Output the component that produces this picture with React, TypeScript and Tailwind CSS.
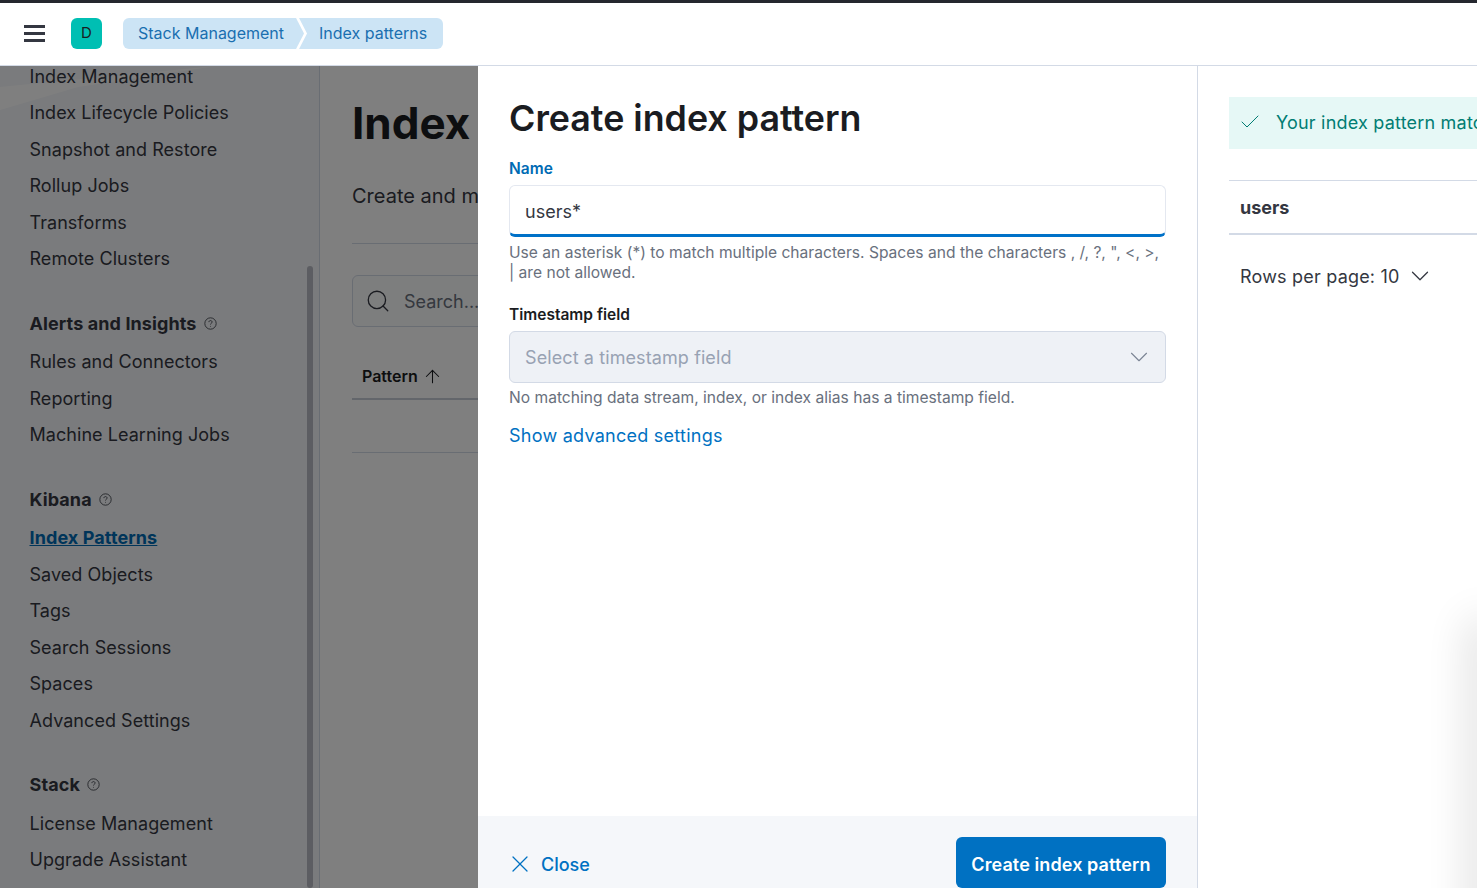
import { ArrowUp, Check, ChevronDown, Search, X } from "lucide-react";

type NavGroup = { title?: string; items: string[] };

const navGroups: NavGroup[] = [
  {
    items: [
      "Index Management",
      "Index Lifecycle Policies",
      "Snapshot and Restore",
      "Rollup Jobs",
      "Transforms",
      "Remote Clusters",
    ],
  },
  {
    title: "Alerts and Insights",
    items: ["Rules and Connectors", "Reporting", "Machine Learning Jobs"],
  },
  {
    title: "Kibana",
    items: ["Index Patterns", "Saved Objects", "Tags", "Search Sessions", "Spaces", "Advanced Settings"],
  },
  {
    title: "Stack",
    items: ["License Management", "Upgrade Assistant"],
  },
];

function HelpIcon() {
  return (
    <svg width="13" height="13" viewBox="0 0 16 16" fill="none" stroke="currentColor" strokeWidth="1" className="text-[#343741]">
      <circle cx="8" cy="8" r="7" />
      <path d="M6 6.3c0-1.2 1-1.900 2-1.900s2 .7 2 1.800c0 1.500-2 1.500-2 3" />
      <circle cx="8" cy="11.300" r=".6" fill="currentColor" stroke="none" />
    </svg>
  );
}

function Sidebar() {
  return (
    <aside className="relative w-[320px] shrink-0 overflow-hidden border-r border-[#d3dae6] bg-[#f5f7fa]">
      {/* faint corner shape behind the nav */}
      <svg className="absolute left-0 top-0" width="220" height="46" viewBox="0 0 220 46">
        <polygon points="0,21 216,0 78,21 0,44" fill="#ffffff" />
      </svg>
      <div className="relative -mt-[8px] pl-[29.500px] text-[18px] tracking-[0.05px] text-[#343741]">
        {navGroups.map((group, i) => (
          <div key={i} className={i > 0 ? "mt-[25.500px]" : ""}>
            {group.title && (
              <div className="flex h-[41px] items-center gap-[7px] font-bold tracking-[0.1px]">
                {group.title}
                <HelpIcon />
              </div>
            )}
            {group.items.map((item) => (
              <div
                key={item}
                className={
                  item === "Index Patterns"
                    ? "flex h-[36.500px] items-center font-bold tracking-[0.1px] text-[#006bb4] underline"
                    : "flex h-[36.500px] items-center"
                }
              >
                {item}
              </div>
            ))}
          </div>
        ))}
      </div>
      <div className="absolute right-[6px] top-[200px] bottom-0 w-[6px] rounded-full bg-[#b8bbc4]" />
    </aside>
  );
}

function PageBehind() {
  return (
    <main className="min-w-0 flex-1 bg-white px-8">
      <h1 className="mt-[28px] text-[44px] leading-[58px] font-bold text-[#1a1c21]">Index patterns</h1>
      <p className="mt-[30px] text-[20px] leading-[28px] text-[#343741]">Create and manage the index patterns</p>
      <div className="mt-[33px] h-px bg-[#d3dae6]" />
      <div className="mt-[31px] flex h-[52px] items-center gap-[13px] rounded-md border border-[#d3dae6] bg-[#fbfcfd] pl-[12px]">
        <Search size={26} strokeWidth={1.200} className="text-[#343741]" />
        <span className="text-[18px] text-[#69707d]">Search...</span>
      </div>
      <div className="mt-[22px] flex h-[51px] items-center gap-[4px] border-b-2 border-[#c7ccd6] pl-[10px] pt-[5px] text-[16px] font-semibold text-[#1a1c21]">
        Pattern
        <ArrowUp size={21} strokeWidth={1.200} />
      </div>
      <div className="h-[53px] border-b border-[#d3dae6]" />
    </main>
  );
}

function CreateForm() {
  return (
    <div className="flex w-[720px] shrink-0 flex-col border-r border-[#d3dae6] bg-white">
      <div className="flex-1 px-[31px] pt-[29px]">
        <h2 className="text-[35.800px] leading-[46px] font-semibold text-[#1a1c21]">Create index pattern</h2>
        <label className="mt-[18px] block text-[15.500px] leading-[20px] font-semibold text-[#006bb4]">Name</label>
        <div className="mt-[6px] flex h-[52px] items-center rounded-md border border-[#e4e8f0] border-b-[3px] border-b-[#0071c8] bg-white px-[15px] pt-[2px] text-[18px] text-[#343741]">
          users*
        </div>
        <p className="mt-[6px] text-[15.600px] leading-[20px] text-[#69707d]">
          Use an asterisk (*) to match multiple characters. Spaces and the characters , /, ?, ", &lt;, &gt;, | are not allowed.
        </p>
        <label className="mt-[22px] block text-[15.500px] leading-[20px] font-semibold text-[#1a1c21]">Timestamp field</label>
        <div className="mt-[6px] flex h-[52px] items-center justify-between rounded-md border border-[#d3dae6] bg-[#eef1f6] pl-[15px] pr-[11px] text-[18px] tracking-[0.1px] text-[#98a2b3]">
          Select a timestamp field
          <ChevronDown size={30} strokeWidth={0.900} className="text-[#7b8494]" />
        </div>
        <p className="mt-[5px] text-[15.600px] leading-[20px] text-[#69707d]">
          No matching data stream, index, or index alias has a timestamp field.
        </p>
        <div className="mt-[16px] text-[18px] leading-[24px] tracking-[0.25px] text-[#0071c2]">Show advanced settings</div>
      </div>
      <div className="flex h-[72px] items-start justify-between bg-[#f5f7fa] pl-[27.500px] pr-[31px] pt-[21px]">
        <div className="flex h-[51px] items-center gap-[7.500px] pt-[3px] text-[18px] font-medium text-[#0071c2]">
          <X size={28} strokeWidth={1.100} />
          Close
        </div>
        <div className="flex h-[51px] items-center rounded-md bg-[#0071c2] px-[15.500px] pt-[3px] text-[18px] font-semibold tracking-[0.1px] text-white">
          Create index pattern
        </div>
      </div>
    </div>
  );
}

function MatchPreview() {
  return (
    <div className="min-w-0 flex-1 overflow-hidden pl-[31px] pt-[31px]">
      <div className="flex h-[52px] w-[400px] items-center gap-[14px] bg-[#e6f8f6] pb-[2px] pl-[9px] text-[18px] tracking-[0.2px] whitespace-nowrap text-[#017d73]">
        <Check size={24} strokeWidth={1} />
        Your index pattern matches 1 source.
      </div>
      <div className="mt-[31px] flex h-[55px] items-center border-y border-y-[#d3dae6] border-b-2 pl-[11px] text-[18px] font-bold text-[#343741]">
        users
      </div>
      <div className="mt-[26px] flex items-center gap-[5px] pl-[11px] text-[18px] tracking-[0.2px] text-[#343741]">
        Rows per page: 10
        <ChevronDown size={30} strokeWidth={1} />
      </div>
    </div>
  );
}

export default function App() {
  return (
    <div className="flex h-screen flex-col overflow-hidden border-t-[3px] border-[#25282f] bg-white font-['Inter',sans-serif]">
      <header className="relative z-20 flex h-[63px] shrink-0 items-center border-b border-[#d3dae6] bg-white pb-px pl-6">
        <div className="flex w-[21px] flex-col gap-[4.500px]">
          <div className="h-[2.500px] bg-[#343741]" />
          <div className="h-[2.500px] bg-[#343741]" />
          <div className="h-[2.500px] bg-[#343741]" />
        </div>
        <div className="ml-[26px] flex h-[31px] w-[31px] items-center justify-center rounded-md bg-[#00bfb3] text-[15px] text-[#1a1c21]">
          D
        </div>
        <div className="ml-[21px] flex h-[31px] text-[16px] text-[#1a6fb0]">
          <div className="flex items-center rounded-l-md bg-[#cce4f5] pb-px pl-[15px] pr-[20px] [clip-path:polygon(0_0,calc(100%-8px)_0,100%_50%,calc(100%-8px)_100%,0_100%)]">
            Stack Management
          </div>
          <div className="-ml-[5px] flex items-center rounded-r-md bg-[#cce4f5] pb-px pl-[20px] pr-[16px] [clip-path:polygon(0_0,100%_0,100%_100%,0_100%,8px_50%)]">
            Index patterns
          </div>
        </div>
      </header>
      <div className="relative flex min-h-0 flex-1">
        <Sidebar />
        <PageBehind />
        <div className="absolute inset-0 z-10 bg-black/50" />
        <div className="absolute inset-y-0 left-[478px] right-0 z-10 flex bg-white">
          <CreateForm />
          <MatchPreview />
          <div className="absolute right-[-12px] top-[560px] h-[400px] w-3 rounded-full shadow-[0_0_40px_10px_rgba(0,0,0,0.12)]" />
        </div>
      </div>
    </div>
  );
}
